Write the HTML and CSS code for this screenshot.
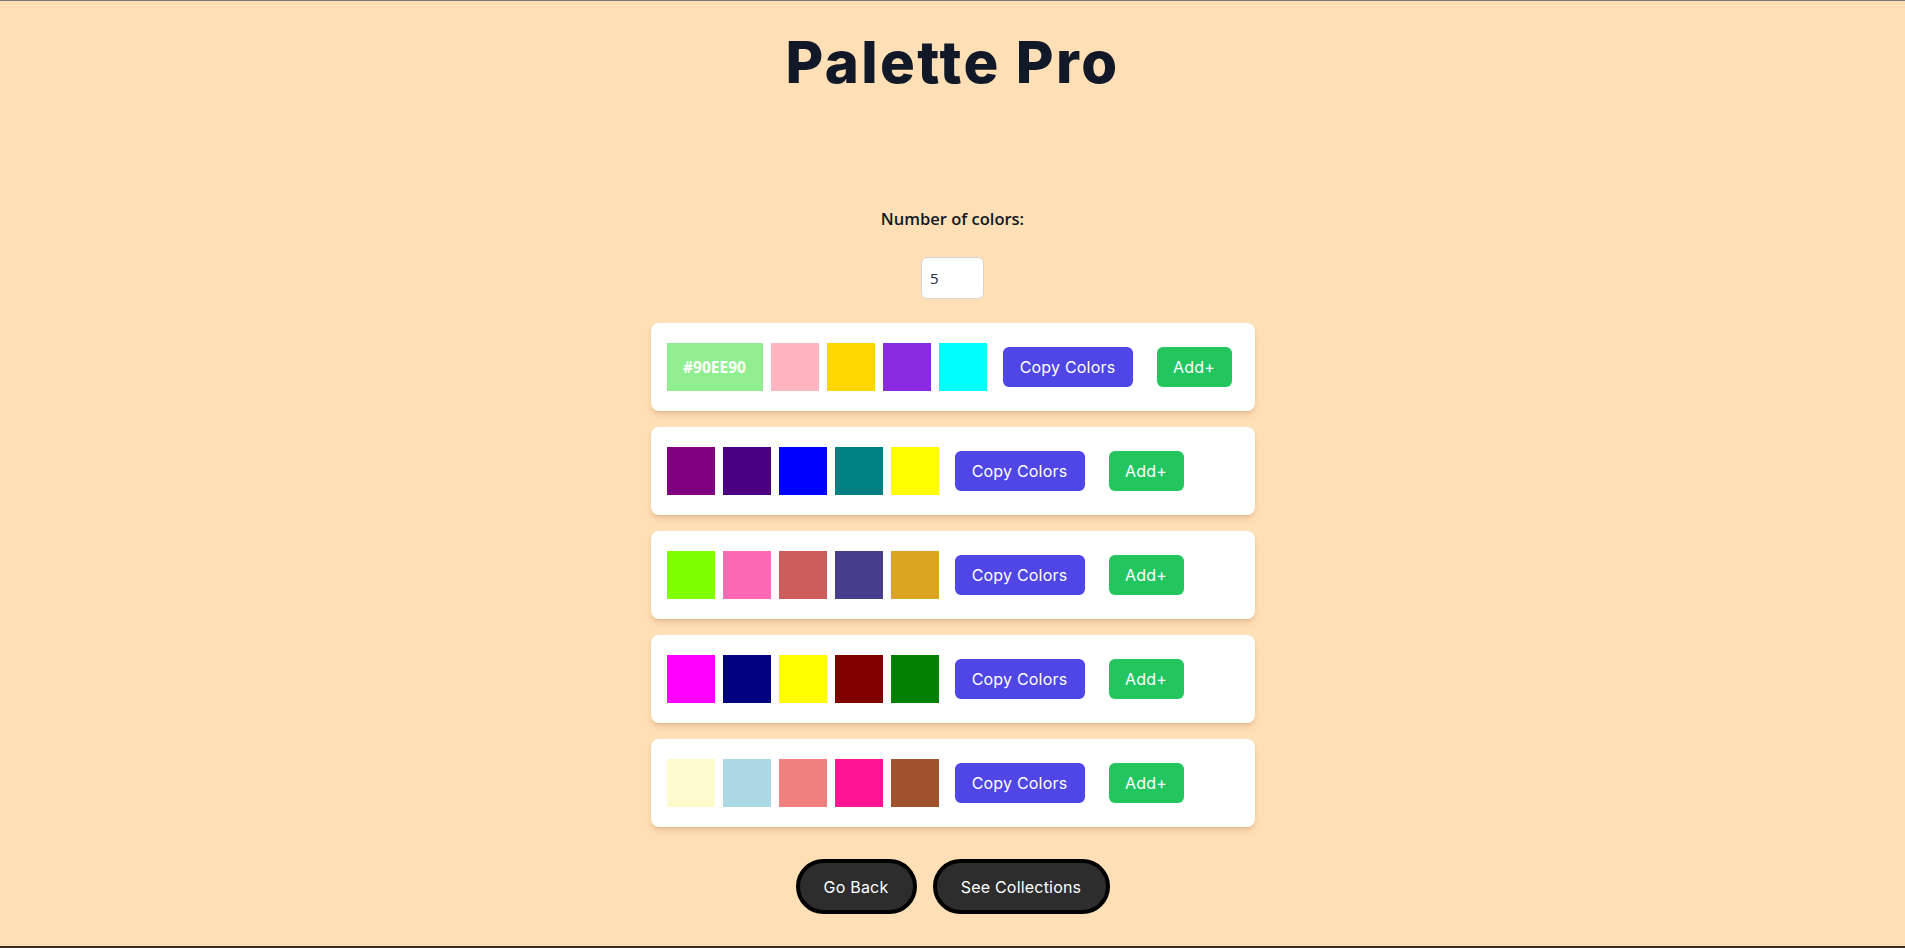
FILE: index.html
```html
<!DOCTYPE html>
<html lang="en">
<head>
<meta charset="utf-8">
<title>Palette Pro</title>
<link rel="stylesheet" href="styles.css">
</head>
<body>
<div class="frame">
  <h1 class="title">Palette Pro</h1>
  <div class="controls">
    <label class="count-label" for="count">Number of colors:</label>
    <input class="count-input" id="count" type="number" value="5">
  </div>
  <div class="palettes">
    <div class="card">
      <div class="swatches">
        <div class="swatch swatch-wide" style="background:#90EE90">#90EE90</div>
        <div class="swatch" style="background:#FFB6C1"></div>
        <div class="swatch" style="background:#FFD700"></div>
        <div class="swatch" style="background:#8A2BE2"></div>
        <div class="swatch" style="background:#00FFFF"></div>
      </div>
      <button class="btn btn-copy">Copy Colors</button>
      <button class="btn btn-add">Add+</button>
    </div>
    <div class="card">
      <div class="swatches">
        <div class="swatch" style="background:#800080"></div>
        <div class="swatch" style="background:#4B0082"></div>
        <div class="swatch" style="background:#0000FF"></div>
        <div class="swatch" style="background:#008080"></div>
        <div class="swatch" style="background:#FFFF00"></div>
      </div>
      <button class="btn btn-copy">Copy Colors</button>
      <button class="btn btn-add">Add+</button>
    </div>
    <div class="card">
      <div class="swatches">
        <div class="swatch" style="background:#7FFF00"></div>
        <div class="swatch" style="background:#FF69B4"></div>
        <div class="swatch" style="background:#CD5C5C"></div>
        <div class="swatch" style="background:#483D8B"></div>
        <div class="swatch" style="background:#DAA520"></div>
      </div>
      <button class="btn btn-copy">Copy Colors</button>
      <button class="btn btn-add">Add+</button>
    </div>
    <div class="card">
      <div class="swatches">
        <div class="swatch" style="background:#FF00FF"></div>
        <div class="swatch" style="background:#000080"></div>
        <div class="swatch" style="background:#FFFF00"></div>
        <div class="swatch" style="background:#800000"></div>
        <div class="swatch" style="background:#008000"></div>
      </div>
      <button class="btn btn-copy">Copy Colors</button>
      <button class="btn btn-add">Add+</button>
    </div>
    <div class="card">
      <div class="swatches">
        <div class="swatch" style="background:#FFFACD"></div>
        <div class="swatch" style="background:#ADD8E6"></div>
        <div class="swatch" style="background:#F08080"></div>
        <div class="swatch" style="background:#FF1493"></div>
        <div class="swatch" style="background:#A0522D"></div>
      </div>
      <button class="btn btn-copy">Copy Colors</button>
      <button class="btn btn-add">Add+</button>
    </div>
  </div>
  <div class="nav">
    <button class="pill pill-back">Go Back</button>
    <button class="pill pill-collections">See Collections</button>
  </div>
</div>
</body>
</html>
```

FILE: styles.css
```css
* { box-sizing: border-box; }
html, body { margin: 0; padding: 0; }
body {
  background: #FFDFB5;
  font-family: "Open Sans", "Noto Sans", sans-serif;
  color: #111827;
}
.frame {
  min-height: 948px;
  border-top: 1px solid #7d7a76;
  border-bottom: 2px solid #3a2c22;
  display: flex;
  flex-direction: column;
  align-items: center;
}
.title {
  margin: 32px 0 0;
  font-family: "Inter", sans-serif;
  font-weight: 800;
  font-size: 58px;
  line-height: 1;
  letter-spacing: 2.4px;
  color: #111827;
}
.controls {
  margin-top: 116px;
  display: flex;
  flex-direction: column;
  align-items: center;
}
.count-label {
  font-family: "Open Sans", sans-serif;
  font-weight: 600;
  font-size: 16.5px;
  line-height: 24px;
  color: #111827;
}
.count-input {
  margin-top: 26px;
  width: 63px;
  height: 42px;
  padding: 0 8px;
  border: 1px solid #d1d5db;
  border-radius: 6px;
  background: #fff;
  font-family: "Open Sans", sans-serif;
  font-size: 15px;
  color: #1f2937;
  -moz-appearance: textfield;
}
.count-input::-webkit-outer-spin-button,
.count-input::-webkit-inner-spin-button { -webkit-appearance: none; margin: 0; }
.palettes {
  margin-top: 24px;
  display: flex;
  flex-direction: column;
  gap: 16px;
}
.card {
  width: 604px;
  height: 88px;
  padding: 0 16px;
  background: #fff;
  border-radius: 8px;
  display: flex;
  align-items: center;
  box-shadow: 0 4px 6px -1px rgba(120, 70, 20, 0.18), 0 2px 4px -2px rgba(120, 70, 20, 0.15);
}
.swatches {
  display: flex;
  gap: 8px;
}
.swatch {
  width: 48px;
  height: 48px;
}
.swatch-wide {
  width: 96px;
  display: flex;
  align-items: center;
  justify-content: center;
  color: #fff;
  font-family: "Open Sans", sans-serif;
  font-weight: 700;
  font-size: 15.5px;
}
.btn {
  height: 40px;
  border: none;
  border-radius: 6px;
  color: #fff;
  font-family: "Inter", sans-serif;
  font-size: 16px;
  font-weight: 400;
  letter-spacing: 0.2px;
  padding: 0;
  cursor: pointer;
}
.btn-copy {
  width: 130px;
  margin-left: 16px;
  background: #4F46E5;
}
.btn-add {
  width: 75px;
  margin-left: 24px;
  background: #22C55E;
}
.nav {
  margin-top: 32px;
  display: flex;
  gap: 16px;
}
.pill {
  height: 55px;
  border: 4px solid #000;
  border-radius: 9999px;
  background: #2d2d2d;
  color: #fff;
  font-family: "Inter", sans-serif;
  font-size: 16px;
  letter-spacing: 0.2px;
  padding: 0;
  cursor: pointer;
}
.pill-back { width: 121px; }
.pill-collections { width: 177px; }
```
